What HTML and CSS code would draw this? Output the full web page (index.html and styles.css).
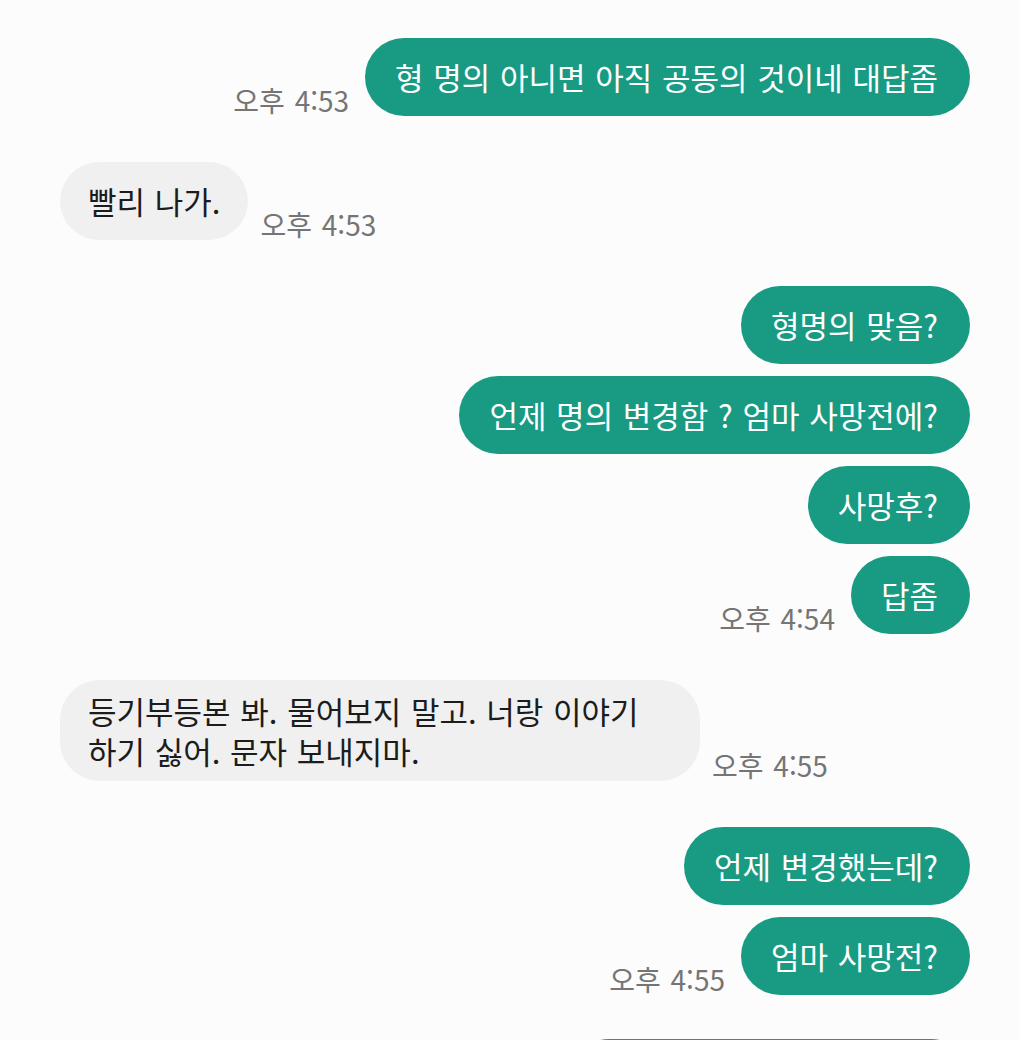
FILE: index.html
```html
<!DOCTYPE html>
<html lang="ko">
<head>
    <meta charset="UTF-8">
    <meta name="viewport" content="width=device-width, initial-scale=1.0">
    <title>메시지</title>
    <link rel="stylesheet" href="styles.css">
</head>
<body>
    <div class="chat">
        <div class="group">
            <div class="row sent">
                <span class="time">오후 4:53</span>
                <div class="bubble out">형 명의 아니면 아직 공동의 것이네 대답좀</div>
            </div>
        </div>

        <div class="group">
            <div class="row recv">
                <div class="bubble in">빨리 나가.</div>
                <span class="time">오후 4:53</span>
            </div>
        </div>

        <div class="group">
            <div class="row sent">
                <div class="bubble out">형명의 맞음?</div>
            </div>
            <div class="row sent">
                <div class="bubble out">언제 명의 변경함 ? 엄마 사망전에?</div>
            </div>
            <div class="row sent">
                <div class="bubble out">사망후?</div>
            </div>
            <div class="row sent">
                <span class="time">오후 4:54</span>
                <div class="bubble out">답좀</div>
            </div>
        </div>

        <div class="group">
            <div class="row recv">
                <div class="bubble in wide">등기부등본 봐. 물어보지 말고. 너랑 이야기 하기 싫어. 문자 보내지마.</div>
                <span class="time">오후 4:55</span>
            </div>
        </div>

        <div class="group">
            <div class="row sent">
                <div class="bubble out">언제 변경했는데?</div>
            </div>
            <div class="row sent">
                <span class="time">오후 4:55</span>
                <div class="bubble out">엄마 사망전?</div>
            </div>
        </div>

        <div class="group last">
            <div class="row sent">
                <div class="bubble out partial"></div>
            </div>
        </div>
    </div>
</body>
</html>
```

FILE: styles.css
```css
html, body {
    margin: 0;
    height: 100%;
    overflow: hidden;
}
body {
    background-color: #fcfcfc;
    font-family: "Noto Sans CJK KR", "Noto Sans", sans-serif;
}
.chat {
    padding: 38px 50px 0 60px;
}
.group {
    display: flex;
    flex-direction: column;
    gap: 12px;
    margin-bottom: 46px;
}
.group.last {
    margin-top: -2px;
}
.row {
    display: flex;
    align-items: flex-end;
}
.row.sent {
    justify-content: flex-end;
}
.bubble {
    box-sizing: border-box;
    min-height: 78px;
    display: flex;
    align-items: center;
    padding: 10px 32px 10px 30px;
    border-radius: 40px;
    font-size: 31px;
    line-height: 40px;
    word-spacing: 1px;
    word-break: keep-all;
}
.bubble.out {
    background-color: #189b82;
    color: #ffffff;
}
.bubble.in {
    background-color: #f0f0f0;
    color: #1c1c1c;
    padding: 10px 28px;
}
.bubble.wide {
    width: 640px;
    min-height: 101px;
}
.bubble.partial {
    width: 400px;
}
.time {
    font-size: 28px;
    line-height: 30px;
    color: #757575;
    word-spacing: 2px;
    margin-bottom: 1px;
    white-space: nowrap;
}
.sent .time {
    margin-right: 16px;
}
.recv .time {
    margin-left: 12px;
}
```
